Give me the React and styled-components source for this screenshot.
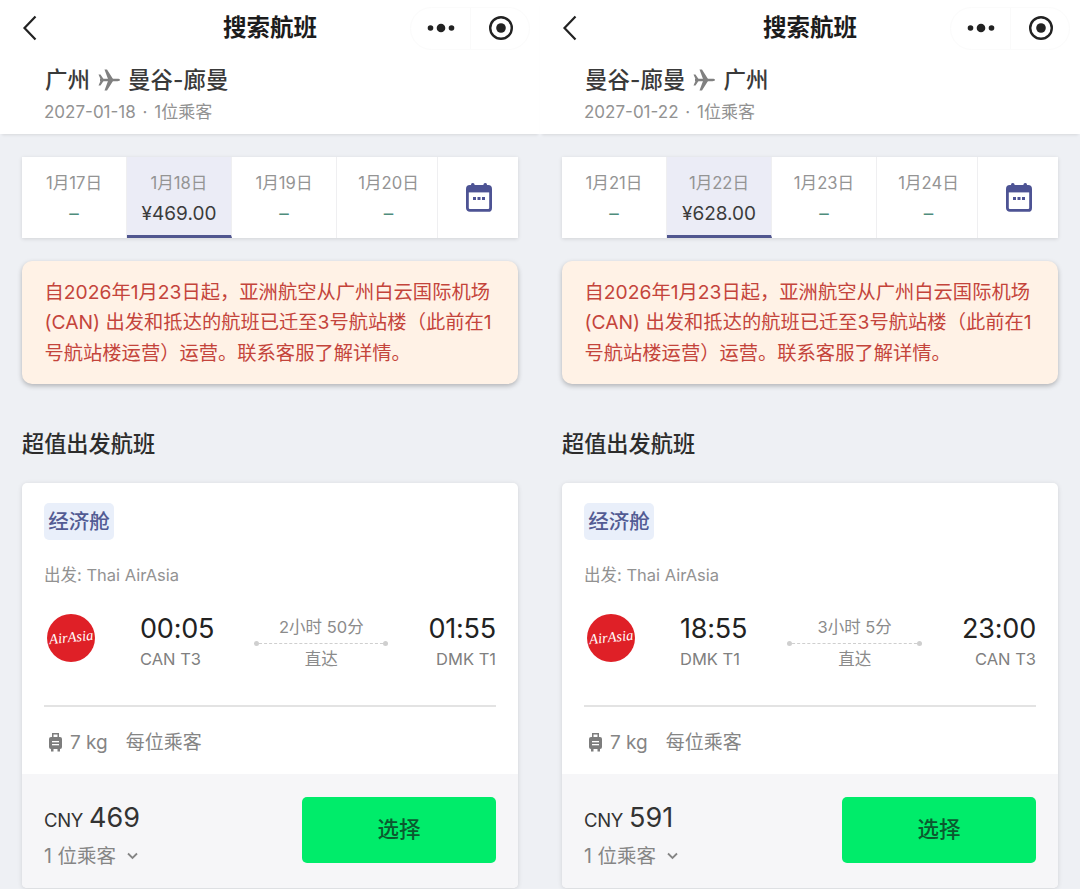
import React from "react";
import styled, { createGlobalStyle } from "styled-components";

const Global = createGlobalStyle`
  html, body { margin: 0; padding: 0; height: 889px; overflow: hidden; background: #eef0f4; }
  body { font-family: Inter, "Noto Sans CJK SC", sans-serif; }
  * { box-sizing: border-box; }
`;

const Page = styled.div`display: flex; width: 1080px; height: 889px; overflow: hidden;`;
const Panel = styled.div`width: 540px; flex: none; display: flex; flex-direction: column; background: #eef0f4;`;
const Header = styled.header`height: 134px; background: #fff; box-shadow: 0 3px 3px -2px rgba(0,0,0,.1); display: flex; flex-direction: column;`;
const NavBar = styled.div`height: 56px; display: flex; align-items: center; justify-content: space-between; position: relative; padding: 0 10px 0 22px;`;
const NavTitle = styled.h1`position: absolute; left: 0; right: 0; top: 11px; margin: 0; text-align: center; font-size: 23.5px; line-height: 34px; font-weight: 700; color: #1c1c1c;`;
const Capsule = styled.div`width: 120px; height: 43px; border: 1px solid #fbfbfb; border-radius: 22px; display: flex; align-items: center; position: relative; z-index: 1;`;
const CapsuleHalf = styled.div`flex: 1; height: 100%; display: flex; align-items: center; justify-content: center; padding-left: 2px; & + & { border-left: 1px solid #fafafa; }`;
const RouteBlock = styled.div`padding: 8px 0 0 44px;`;
const Route = styled.div`display: flex; align-items: center; gap: 8px; margin-left: 1px; font-size: 22.5px; line-height: 32px; font-weight: 500; color: #3a3a3a;`;
const Sub = styled.div`font-size: 17px; line-height: 24px; margin-top: 4px; color: #929292; word-spacing: 2px;`;

const Body = styled.main`padding: 23px 22px 0; display: flex; flex-direction: column;`;
const DateStrip = styled.div`height: 81px; display: grid; grid-template-columns: 105px 105px 105px 101px 80px; background: #fff; box-shadow: 0 1px 4px rgba(0,0,0,.12);`;
const DateCell = styled.div`
  display: flex; flex-direction: column; align-items: center; padding-top: 15px;
  border-right: 1px solid #efeff1;
  background: ${p => (p.$active ? "#ebecf6" : "#fff")};
  border-bottom: ${p => (p.$active ? "3px solid #50568f" : "0")};
  &:nth-child(4) { padding-left: 3px; }
`;
const DateLabel = styled.div`font-size: 16.6px; line-height: 22px; color: #949494;`;
const DatePrice = styled.div`margin-top: 8px; font-size: 19px; line-height: 24px; color: ${p => (p.$empty ? "#4f8d7c" : "#3b3b3b")};`;
const CalCell = styled.div`display: flex; align-items: center; justify-content: center; padding-left: 2px;`;

const Notice = styled.div`margin-top: 23px; height: 123px; padding: 15.5px 22px 0 22.5px; background: #fff2e6; border-radius: 10px; box-shadow: 0 2px 5px rgba(0,0,0,.26); color: #c4443b; font-size: 19.3px; line-height: 30.5px;`;
const Heading = styled.h2`margin: 43.5px 0 0; font-size: 22.2px; line-height: 32px; font-weight: 500; color: #2c2c2c;`;

const Card = styled.section`margin-top: 23px; height: 405px; background: #fff; border-radius: 5px; box-shadow: 0 1px 5px rgba(0,0,0,.12); display: flex; flex-direction: column; overflow: hidden;`;
const CardMain = styled.div`height: 291px; padding: 20px 22px 0; display: flex; flex-direction: column; align-items: flex-start;`;
const CabinTag = styled.div`width: 70px; height: 37px; border-radius: 5px; background: #e9effa; color: #525b93; font-size: 20.5px; font-weight: 500; line-height: 37px; text-align: center;`;
const Carrier = styled.div`margin-top: 23px; font-size: 16.5px; line-height: 24px; color: #929292;`;
const TimesRow = styled.div`align-self: stretch; margin-top: 25px; height: 63px; display: flex; align-items: flex-start;`;
const LogoCol = styled.div`width: 96px; flex: none; padding-left: 3px; padding-top: 2px;`;
const Logo = styled.div`width: 48px; height: 48px; border-radius: 50%; background: #df2027; color: #fff; display: flex; align-items: center; justify-content: center; font-family: "Liberation Serif", serif; font-style: italic; font-size: 14.5px; white-space: nowrap;`;
const LogoMark = styled.span`display: block; transform: rotate(-6deg);`;
const Stop = styled.div`flex: none; display: flex; flex-direction: column; align-items: ${p => (p.$end ? "flex-end" : "flex-start")};`;
const Time = styled.div`font-size: 27px; line-height: 34px; font-weight: 400; color: #222; letter-spacing: -.2px;`;
const Airport = styled.div`margin-top: 1px; font-size: 16.5px; line-height: 24px; color: #808080;`;
const Mid = styled.div`flex: 1; margin: 3px 40px 0; display: flex; flex-direction: column; align-items: center; font-size: 16.5px; line-height: 24px; color: #8b8b8b;`;
const Line = styled.div`
  align-self: stretch; height: 7px; margin: 1px 0 0; position: relative; display: flex; align-items: center;
  &::before { content: ""; flex: 1; border-top: 1px dashed #cfcfcf; }
`;
const Dot = styled.span`position: absolute; top: 1px; width: 5px; height: 5px; border-radius: 50%; background: #cfcfcf; ${p => (p.$end ? "right: 0;" : "left: 0;")}`;
const Divider = styled.div`align-self: stretch; margin-top: 30px; height: 2px; background: #e3e3e3;`;
const Baggage = styled.div`margin-top: 21px; padding-left: 4px; display: flex; align-items: center; font-size: 19px; line-height: 30px; color: #858585;`;
const BagWeight = styled.span`margin: 0 18px 0 7px;`;
const CardFoot = styled.div`height: 114px; background: #f6f6f8; padding: 23px 22px 0; display: flex; justify-content: space-between; align-items: flex-start;`;
const Price = styled.div`font-size: 18.5px; line-height: 40px; color: #333; margin-top: 1px; display: flex; align-items: baseline; gap: 6px; letter-spacing: -.3px;`;
const Amount = styled.span`font-size: 27px; letter-spacing: 0;`;
const Pax = styled.div`display: flex; align-items: center; gap: 11px; font-size: 19.5px; line-height: 28px; color: #858585; margin-top: 2px;`;
const SelectButton = styled.button`width: 194px; height: 66px; padding: 0 0 5px; border: 0; border-radius: 5px; background: #00ec6a; color: #0b5a2f; font: 500 21.5px Inter, "Noto Sans CJK SC", sans-serif;`;

const Back = () => (
  <svg width="16" height="26" viewBox="0 0 16 26" fill="none" stroke="#222" strokeWidth="2.2"><path d="M13.5 1.5 2.5 13l11 11.5" /></svg>
);
const More = () => (
  <svg width="28" height="12" viewBox="0 0 28 12" fill="#222"><circle cx="3.5" cy="6" r="2.8" /><circle cx="14" cy="6" r="4.3" /><circle cx="24.5" cy="6" r="2.8" /></svg>
);
const Target = () => (
  <svg width="26" height="26" viewBox="0 0 26 26"><circle cx="13" cy="13" r="10.8" fill="none" stroke="#222" strokeWidth="2.4" /><circle cx="13" cy="13" r="4.8" fill="#222" /></svg>
);
const PlaneIcon = () => (
  <svg width="22" height="22" viewBox="0 0 22 22" fill="#808080"><path d="M2 9.8h17.5c1.500 0 2.500.5 2.500 1.200s-1 1.200-2.500 1.200H2z" /><path d="M6.500.5H9L15 10h-5zM6.500 21.500H9L15 12h-5zM.5 5.500h2L5.500 10h-3zM.5 16.500h2L5.500 12h-3z" /></svg>
);
const CalendarIcon = () => (
  <svg width="26" height="29" viewBox="0 0 26 29"><rect x="5" y="0" width="3.5" height="6" rx="1.5" fill="#4d5394" /><rect x="17.5" y="0" width="3.5" height="6" rx="1.5" fill="#4d5394" /><rect x="1.4" y="3.4" width="23.2" height="24" rx="2.5" fill="#fff" stroke="#4d5394" strokeWidth="2.8" /><rect x="1.4" y="3.4" width="23.2" height="6" fill="#4d5394" /><rect x="7" y="14" width="3" height="3" fill="#4d5394" /><rect x="11.5" y="14" width="3" height="3" fill="#4d5394" /><rect x="16" y="14" width="3" height="3" fill="#4d5394" /></svg>
);
const BagIcon = () => (
  <svg width="15" height="19" viewBox="0 0 15 19" fill="#7d7d7d"><path d="M4 0h7v4H9.500V1.500h-4V4H4z" /><rect x="1" y="4" width="13" height="12" rx="2" /><rect x="3" y="16" width="2.5" height="2.5" /><rect x="9.5" y="16" width="2.5" height="2.5" /><rect x="4" y="8" width="7" height="1.3" fill="#fff" /><rect x="4" y="11" width="7" height="1.3" fill="#fff" /></svg>
);
const Chevron = () => (
  <svg width="11" height="8" viewBox="0 0 11 8" fill="none" stroke="#858585" strokeWidth="1.8"><path d="m1 1.500 4.500 4.500L10 1.500" /></svg>
);

const panels = [
  {
    route: ["广州", "曼谷-廊曼"], sub: "2027-01-18 · 1位乘客",
    days: ["1月17日", "1月18日", "1月19日", "1月20日"], fare: "¥469.00",
    from: ["00:05", "CAN T3"], to: ["01:55", "DMK T1"], dur: "2小时 50分", price: "469",
  },
  {
    route: ["曼谷-廊曼", "广州"], sub: "2027-01-22 · 1位乘客",
    days: ["1月21日", "1月22日", "1月23日", "1月24日"], fare: "¥628.00",
    from: ["18:55", "DMK T1"], to: ["23:00", "CAN T3"], dur: "3小时 5分", price: "591",
  },
];

const Flight = ({ d }) => (
  <Panel>
    <Header>
      <NavBar>
        <Back />
        <NavTitle>搜索航班</NavTitle>
        <Capsule>
          <CapsuleHalf><More /></CapsuleHalf>
          <CapsuleHalf><Target /></CapsuleHalf>
        </Capsule>
      </NavBar>
      <RouteBlock>
        <Route><span>{d.route[0]}</span><PlaneIcon /><span>{d.route[1]}</span></Route>
        <Sub>{d.sub}</Sub>
      </RouteBlock>
    </Header>
    <Body>
      <DateStrip>
        {d.days.map((day, i) => (
          <DateCell key={day} $active={i === 1}>
            <DateLabel>{day}</DateLabel>
            <DatePrice $empty={i !== 1}>{i === 1 ? d.fare : "–"}</DatePrice>
          </DateCell>
        ))}
        <CalCell><CalendarIcon /></CalCell>
      </DateStrip>
      <Notice>自2026年1月23日起，亚洲航空从广州白云国际机场(CAN) 出发和抵达的航班已迁至3号航站楼（此前在1号航站楼运营）运营。联系客服了解详情。</Notice>
      <Heading>超值出发航班</Heading>
      <Card>
        <CardMain>
          <CabinTag>经济舱</CabinTag>
          <Carrier>出发: Thai AirAsia</Carrier>
          <TimesRow>
            <LogoCol><Logo><LogoMark>AirAsia</LogoMark></Logo></LogoCol>
            <Stop><Time>{d.from[0]}</Time><Airport>{d.from[1]}</Airport></Stop>
            <Mid>
              <div>{d.dur}</div>
              <Line><Dot /><Dot $end /></Line>
              <div>直达</div>
            </Mid>
            <Stop $end><Time>{d.to[0]}</Time><Airport>{d.to[1]}</Airport></Stop>
          </TimesRow>
          <Divider />
          <Baggage><BagIcon /><BagWeight>7 kg</BagWeight>每位乘客</Baggage>
        </CardMain>
        <CardFoot>
          <div>
            <Price>CNY<Amount>{d.price}</Amount></Price>
            <Pax>1 位乘客<Chevron /></Pax>
          </div>
          <SelectButton>选择</SelectButton>
        </CardFoot>
      </Card>
    </Body>
  </Panel>
);

export default function App() {
  return (
    <Page>
      <Global />
      {panels.map(d => <Flight key={d.sub} d={d} />)}
    </Page>
  );
}
